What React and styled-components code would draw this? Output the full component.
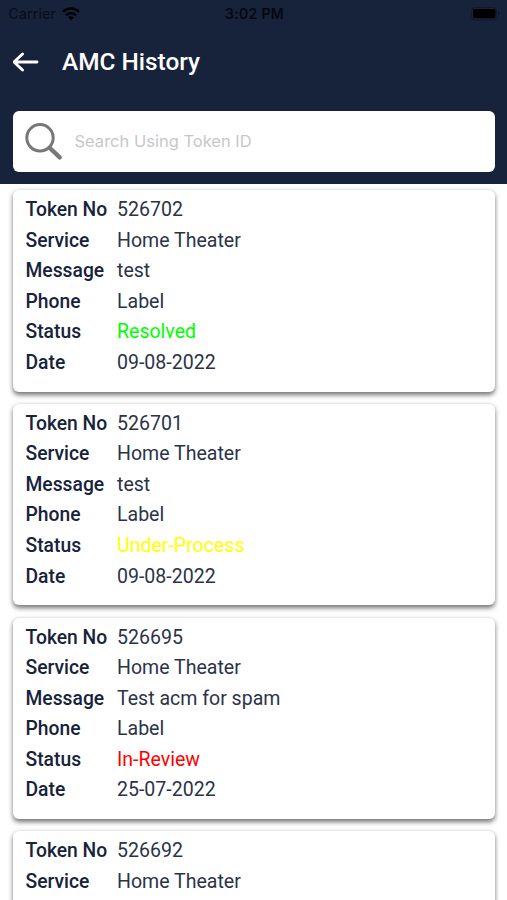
import { useState } from 'react'
import styled, { createGlobalStyle } from 'styled-components'

const history = [
  { 'Token No': '526702', Service: 'Home Theater', Message: 'test', Phone: 'Label', Status: 'Resolved', Date: '09-08-2022' },
  { 'Token No': '526701', Service: 'Home Theater', Message: 'test', Phone: 'Label', Status: 'Under-Process', Date: '09-08-2022' },
  { 'Token No': '526695', Service: 'Home Theater', Message: 'Test acm for spam', Phone: 'Label', Status: 'In-Review', Date: '25-07-2022' },
  { 'Token No': '526692', Service: 'Home Theater' },
]

const statusColors = {
  'Resolved': '#00ff00',
  'Under-Process': '#ffff00',
  'In-Review': '#ff0000',
}

function HistoryCard({ item }) {
  return (
    <Card>
      { Object.entries(item).map(([label, value]) => (
        <Row key={ label }>
          <Label>{ label }</Label>
          <Value $color={ label === 'Status' ? statusColors[value] : undefined }>{ value }</Value>
        </Row>
      )) }
    </Card>
  )
}

function App() {
  const [search, setSearch] = useState('')
  const items = history.filter((item) => item['Token No'].includes(search))

  return (
    <Screen>
      <GlobalStyle />
      <Header>
        <StatusBar>
          <Carrier>
            <span>Carrier</span>
            <svg width="18" height="14" viewBox="0 0 18 14" fill="none" stroke="#000" strokeWidth="2.5">
              <path d="M1 4.9C5.5 0.5 12.5 0.5 17 4.9" />
              <path d="M4 8.3C6.8 5.6 11.2 5.6 14 8.3" />
              <path d="M9 13.2L6 10.3C7.7 8.8 10.3 8.8 12 10.3Z" fill="#000" stroke="none" />
            </svg>
          </Carrier>
          <Clock>3:02 PM</Clock>
          <Battery>
            <svg width="30" height="14" viewBox="0 0 30 14">
              <rect x="0.5" y="0.5" width="25" height="12.5" rx="3.5" fill="none" stroke="#000" strokeOpacity="0.25" />
              <rect x="2" y="2" width="22.5" height="9.2" rx="2" fill="#000" />
              <path d="M27 4.8C29 5.4 29 8.2 27 8.8Z" fill="#000" fillOpacity="0.3" />
            </svg>
          </Battery>
        </StatusBar>
        <TitleBar>
          <BackButton aria-label="Back">
            <svg width="26" height="20" viewBox="0 0 26 20" fill="none" stroke="#fff" strokeWidth="2.9" strokeLinecap="round" strokeLinejoin="round">
              <path d="M24 10H1.5M9.5 2L1 10L9.5 18" />
            </svg>
          </BackButton>
          <Title>AMC History</Title>
        </TitleBar>
        <SearchBox>
          <svg width="38" height="38" viewBox="0 0 38 38" fill="none" stroke="#777">
            <circle cx="15" cy="14.8" r="13.2" strokeWidth="3" />
            <path d="M24.6 24.7L34.7 34.4" strokeWidth="4.3" strokeLinecap="round" />
          </svg>
          <input type="text" placeholder="Search Using Token ID" value={ search } onChange={ (e) => setSearch(e.target.value) } />
        </SearchBox>
      </Header>
      <List>
        { items.map((item) => <HistoryCard key={ item['Token No'] } item={ item } />) }
      </List>
    </Screen>
  )
}

const GlobalStyle = createGlobalStyle`
  *{
    box-sizing: border-box;
  }
  body{
    margin: 0;
    background-color: #fff;
    font-family: Roboto, sans-serif;
  }
`

const Screen = styled.div`
  height: 100vh;
  overflow: hidden;
  display: flex;
  flex-direction: column;
`

const Header = styled.header`
  flex: none;
  height: 184px;
  padding: 0 12.5px;
  background-color: #17223b;
`

const StatusBar = styled.div`
  display: grid;
  grid-template-columns: 1fr auto 1fr;
  align-items: center;
  height: 27px;
  margin: 0 -6px 0 -4px;
  font-family: Inter, sans-serif;
  font-size: 14px;
  color: #000;
`

const Carrier = styled.div`
  display: flex;
  align-items: center;
  gap: 6px;
  color: #080c15;
  span{
    letter-spacing: .25px;
  }
`

const Clock = styled.div`
  font-weight: 600;
  letter-spacing: .35px;
  color: #05080e;
`

const Battery = styled.div`
  display: flex;
  justify-content: flex-end;
`

const TitleBar = styled.div`
  display: flex;
  align-items: center;
  height: 70px;
  gap: 23.5px;
`

const BackButton = styled.button`
  display: flex;
  padding: 0;
  border: none;
  background: none;
  cursor: pointer;
`

const Title = styled.h1`
  margin: 0 0 1.5px;
  font-size: 24.4px;
  font-weight: 500;
  color: #fff;
`

const SearchBox = styled.div`
  display: flex;
  align-items: center;
  height: 61px;
  margin-top: 14px;
  padding: 0 12px;
  gap: 12px;
  border-radius: 6px;
  background-color: #fff;
  svg{
    flex: none;
  }
  input{
    flex: 1;
    min-width: 0;
    padding: 0 0 1px;
    border: none;
    outline: none;
    font-family: Inter, sans-serif;
    font-size: 16.5px;
    color: #17223b;
    &::placeholder{
      color: #c7c7c9;
    }
  }
`

const List = styled.main`
  display: flex;
  flex-direction: column;
  gap: 12.25px;
  padding: 6.2px 12.5px 0;
`

const Card = styled.section`
  flex: none;
  height: 201.5px;
  padding: 4.1px 13px 0;
  border-radius: 6px;
  background-color: #fff;
  box-shadow: 0 2.5px 5px rgba(0, 0, 0, .55);
`

const Row = styled.div`
  display: flex;
  align-items: center;
  height: 30.55px;
  font-size: 19.55px;
  white-space: nowrap;
`

const Label = styled.span`
  width: 91.5px;
  font-size: 19.3px;
  font-weight: 500;
  color: #17223b;
`

const Value = styled.span`
  color: ${({ $color }) => $color || '#2b3348'};
`

export default App
